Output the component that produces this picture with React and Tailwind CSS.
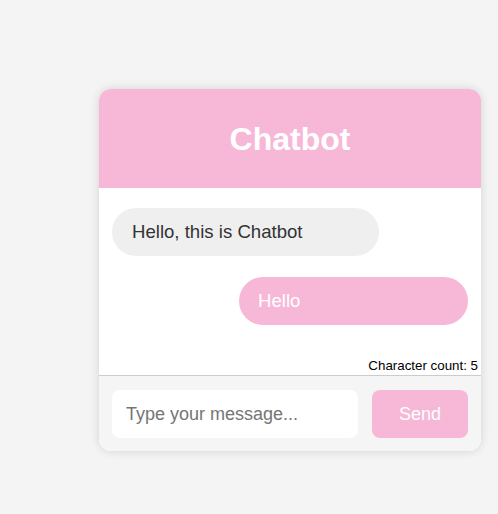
export default function App() {
  return (
    <div className="min-h-[514px] w-full bg-[#f4f4f4] pl-[99px] pt-[89px]" style={{ fontFamily: '"Liberation Sans", Arial, sans-serif' }}>
      <div className="flex w-[382px] flex-col overflow-hidden rounded-[12px] bg-white shadow-[0_0_10px_rgba(0,0,0,0.14)]">
        <div className="flex h-[99px] items-center justify-center bg-[#f7b8d8]">
          <h1 className="text-[32px] font-bold text-white">Chatbot</h1>
        </div>
        <div className="flex h-[187px] flex-col bg-white">
          <div className="flex flex-col gap-[21px] px-[13px] pt-[20px]">
            <div className="flex h-[48px] w-[267px] items-center rounded-full bg-[#efefef] pl-[20px] text-[18.6px] text-[#333]">
              Hello, this is Chatbot
            </div>
            <div className="flex h-[48px] w-[229px] items-center self-end rounded-full bg-[#f7b8d8] pl-[19px] text-[18.6px] text-white">
              Hello
            </div>
          </div>
          <div className="mt-auto pb-[1px] pr-[3px] text-right text-[13.333px] leading-[16px] text-black">
            Character count: 5
          </div>
        </div>
        <div className="flex gap-[14px] border-t border-[#cccccc] bg-[#f5f5f5] px-[13px] pb-[13px] pt-[14px]">
          <input
            className="h-[48px] w-[246px] rounded-[8px] bg-white px-[14px] text-[18px] text-[#333] outline-none placeholder:text-[#757575]"
            placeholder="Type your message..."
          />
          <button className="h-[48px] w-[96px] rounded-[8px] bg-[#f7b8d8] text-[18px] text-white">Send</button>
        </div>
      </div>
    </div>
  );
}
